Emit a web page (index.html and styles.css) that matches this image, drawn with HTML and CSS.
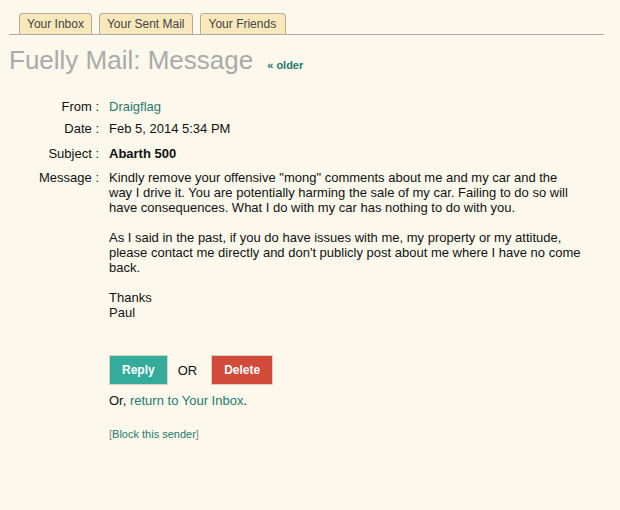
FILE: index.html
```html
<!DOCTYPE html>
<html lang="en">
<head>
    <meta charset="UTF-8">
    <title>Fuelly Mail: Message</title>
    <link rel="stylesheet" href="styles.css">
</head>
<body>
    <ul class="tabs">
        <li class="tab"><a href="#">Your Inbox</a></li>
        <li class="tab"><a href="#">Your Sent Mail</a></li>
        <li class="tab"><a href="#">Your Friends</a></li>
    </ul>

    <div class="page-title">
        <h1>Fuelly Mail: Message</h1>
        <a class="older" href="#">&laquo; older</a>
    </div>

    <div class="message">
        <div class="label">From :</div>
        <div class="value"><a href="#">Draigflag</a></div>

        <div class="label">Date :</div>
        <div class="value">Feb 5, 2014 5:34 PM</div>

        <div class="label subject-label">Subject :</div>
        <div class="value subject">Abarth 500</div>

        <div class="label body-label">Message :</div>
        <div class="value body">
            Kindly remove your offensive "mong" comments about me and my car and the way I drive it. You are potentially harming the sale of my car. Failing to do so will have consequences. What I do with my car has nothing to do with you.<br><br>
            As I said in the past, if you do have issues with me, my property or my attitude, please contact me directly and don't publicly post about me where I have no come back.<br><br>
            Thanks<br>
            Paul
        </div>
    </div>

    <div class="actions">
        <button class="btn btn-reply">Reply</button>
        <span class="or">OR</span>
        <button class="btn btn-delete">Delete</button>
    </div>

    <p class="return">Or, <a href="#">return to Your Inbox</a>.</p>

    <p class="block">[<a href="#">Block this sender</a>]</p>
</body>
</html>
```

FILE: styles.css
```css
body {
    margin: 0;
    padding: 13px 16px 0 9px;
    background-color: #fcf9ec;
    font-family: "Liberation Sans", Arial, sans-serif;
    font-size: 13px;
    color: #111;
}
a {
    color: #27786d;
    text-decoration: none;
}

/* tabs */
.tabs {
    display: flex;
    gap: 7px;
    margin: 0;
    padding: 0 0 0 10px;
    list-style: none;
    border-bottom: 1px solid #aaa;
}
.tab a {
    display: block;
    padding: 3px 7px 3px;
    font-size: 12px;
    line-height: 14px;
    color: #444;
    background-color: #fae8bd;
    border: 1px solid #b4aa96;
    border-bottom: none;
    border-radius: 4px 4px 0 0;
}
.tab:last-child a {
    padding: 3px 9px 3px 8px;
}

/* title */
.page-title {
    display: flex;
    align-items: baseline;
    gap: 14px;
    margin-top: 10px;
}
.page-title h1 {
    margin: 0;
    font-size: 26px;
    font-weight: normal;
    line-height: 30px;
    color: #aaa;
}
.older {
    font-size: 11px;
    font-weight: bold;
}

/* message details */
.message {
    display: grid;
    grid-template-columns: 90px 473px;
    column-gap: 10px;
    row-gap: 7px;
    margin-top: 24px;
    line-height: 15px;
}
.label {
    text-align: right;
}
.subject-label,
.subject {
    margin-top: 3px;
}
.subject {
    font-weight: bold;
}
.body-label,
.body {
    margin-top: 2px;
}

/* buttons */
.actions {
    display: flex;
    align-items: center;
    gap: 10px;
    margin: 35px 0 0 100px;
}
.btn {
    height: 30px;
    padding: 0 12px;
    border: 1px solid #d8d2c6;
    font-family: inherit;
    font-size: 12px;
    font-weight: bold;
    color: #fff;
    cursor: pointer;
}
.btn-reply {
    background-color: #35ab9c;
}
.btn-delete {
    margin-left: 4px;
    background-color: #d24a3a;
}
.return {
    margin: 8px 0 0 100px;
}
.block {
    margin: 20px 0 0 100px;
    font-size: 11px;
    color: #888;
}
```
